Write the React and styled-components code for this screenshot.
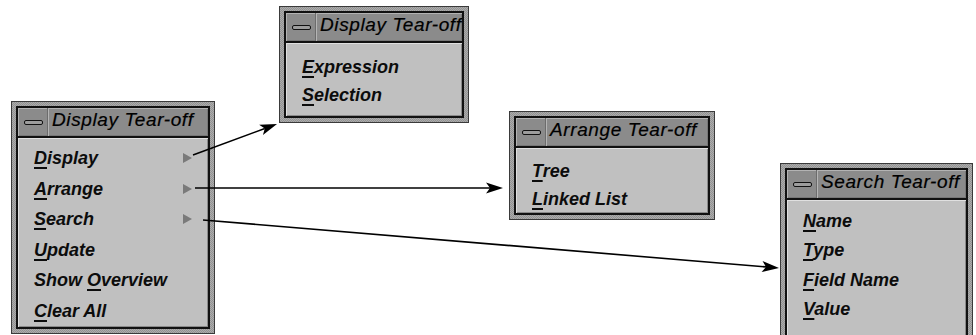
import React from "react";
import styled, { createGlobalStyle } from "styled-components";

const Global = createGlobalStyle`
  html, body { margin: 0; padding: 0; background: #ffffff; }
  body { font-family: "Liberation Sans", Arial, sans-serif; }
`;

const Desk = styled.div`
  position: relative;
  width: 976px;
  height: 335px;
  overflow: hidden;
  background: #ffffff;
`;

const Win = styled.div`
  position: absolute;
  left: ${(p) => p.$x}px;
  top: ${(p) => p.$y}px;
  width: ${(p) => p.$w}px;
  height: ${(p) => p.$h}px;
  box-sizing: border-box;
  border: 1px solid #3a3a3a;
  padding: 4px;
  background: repeating-conic-gradient(#acacac 0 25%, #929292 0 50%) 0 0 / 2px 2px;
  display: flex;
  flex-direction: column;
`;

const Inner = styled.div`
  flex: 1;
  min-height: 0;
  display: flex;
  flex-direction: column;
  border: 2px solid #111111;
  overflow: hidden;
`;

const TitleBar = styled.div`
  flex: none;
  height: 28px;
  display: flex;
  background: #8b8b8b;
  border-bottom: 2px solid #111111;
  box-shadow: inset 1px 1px 0 #b3b3b3, inset -1px -1px 0 #777777;
`;

const MenuButton = styled.div`
  flex: none;
  width: 30px;
  display: flex;
  align-items: center;
  justify-content: center;
  border-right: 1px solid #b5b5b5;
  box-shadow: inset -1px 0 0 #6c6c6c;
`;

const Dash = styled.span`
  width: 17px;
  height: 3px;
  border: 1px solid #111111;
  border-radius: 2px;
  background: #9d9d9d;
`;

const Title = styled.div`
  padding-left: 3px;
  font-style: italic;
  font-size: 19px;
  letter-spacing: 0.6px;
  line-height: 24px;
  color: #000000;
  -webkit-text-stroke: 0.2px #000000;
  white-space: nowrap;
`;

const Body = styled.div`
  flex: 1;
  display: flex;
  flex-direction: column;
  gap: ${(p) => p.$gap}px;
  padding: ${(p) => p.$pad}px 16px 0 15px;
  background: #c0c0c0;
  border-top: 1px solid #e0e0e0;
  border-left: 1px solid #e0e0e0;
  box-shadow: inset -1px -1px 0 #8a8a8a;
`;

const Item = styled.div`
  display: flex;
  align-items: center;
  justify-content: space-between;
  font-style: italic;
  font-weight: bold;
  font-size: 18px;
  line-height: 22px;
  color: #0c0c0c;
  white-space: nowrap;
`;

const Key = styled.span`
  text-decoration: underline;
  text-decoration-thickness: 2px;
  text-underline-offset: 3px;
`;

const Cascade = styled.span`
  width: 0;
  height: 0;
  border-top: 5px solid transparent;
  border-bottom: 5px solid transparent;
  border-left: 9px solid #7a7a7a;
`;

const Overlay = styled.svg`
  position: absolute;
  left: 0;
  top: 0;
  pointer-events: none;
`;

const Label = ({ text, k }) => {
  const i = k || 0;
  return (
    <span>
      {text.slice(0, i)}
      <Key>{text[i]}</Key>
      {text.slice(i + 1)}
    </span>
  );
};

const TearOff = ({ x, y, w, h, title, items, pad, gap }) => (
  <Win $x={x} $y={y} $w={w} $h={h}>
    <Inner>
      <TitleBar>
        <MenuButton>
          <Dash />
        </MenuButton>
        <Title>{title}</Title>
      </TitleBar>
      <Body $pad={pad} $gap={gap}>
        {items.map((it, i) => (
          <Item key={i}>
            <Label text={it.t} k={it.k} />
            {it.sub && <Cascade />}
          </Item>
        ))}
      </Body>
    </Inner>
  </Win>
);

const Arrow = ({ x1, y1, x2, y2 }) => {
  const dx = x2 - x1;
  const dy = y2 - y1;
  const len = Math.hypot(dx, dy);
  const ux = dx / len;
  const uy = dy / len;
  const bx = x2 - ux * 17;
  const by = y2 - uy * 17;
  const nx = x2 - ux * 13;
  const ny = y2 - uy * 13;
  const px = -uy * 5.5;
  const py = ux * 5.5;
  const pts = `${x2},${y2} ${bx + px},${by + py} ${nx},${ny} ${bx - px},${by - py}`;
  return (
    <g>
      <line x1={x1} y1={y1} x2={nx} y2={ny} stroke="#000" strokeWidth="1.6" />
      <polygon points={pts} fill="#000" />
    </g>
  );
};

const mainItems = [
  { t: "Display", sub: true },
  { t: "Arrange", sub: true },
  { t: "Search", sub: true },
  { t: "Update" },
  { t: "Show Overview", k: 5 },
  { t: "Clear All" },
];

const App = () => (
  <>
    <Global />
    <Desk>
      <TearOff x={11} y={101} w={204} h={233} title="Display Tear-off" items={mainItems} pad={8} gap={8.6} />
      <TearOff
        x={279}
        y={6}
        w={190}
        h={117}
        title="Display Tear-off"
        items={[{ t: "Expression" }, { t: "Selection" }]}
        pad={12}
        gap={5.5}
      />
      <TearOff
        x={509}
        y={111}
        w={206}
        h={109}
        title="Arrange Tear-off"
        items={[{ t: "Tree" }, { t: "Linked List" }]}
        pad={11}
        gap={6}
      />
      <TearOff
        x={780}
        y={163}
        w={193}
        h={185}
        title="Search Tear-off"
        items={[{ t: "Name" }, { t: "Type" }, { t: "Field Name" }, { t: "Value" }]}
        pad={9}
        gap={7.3}
      />
      <Overlay width="976" height="335" viewBox="0 0 976 335">
        <Arrow x1={193} y1={155} x2={277} y2={124} />
        <Arrow x1={195} y1={188} x2={503} y2={188} />
        <Arrow x1={203} y1={220} x2={779} y2={268} />
      </Overlay>
    </Desk>
  </>
);

export default App;
